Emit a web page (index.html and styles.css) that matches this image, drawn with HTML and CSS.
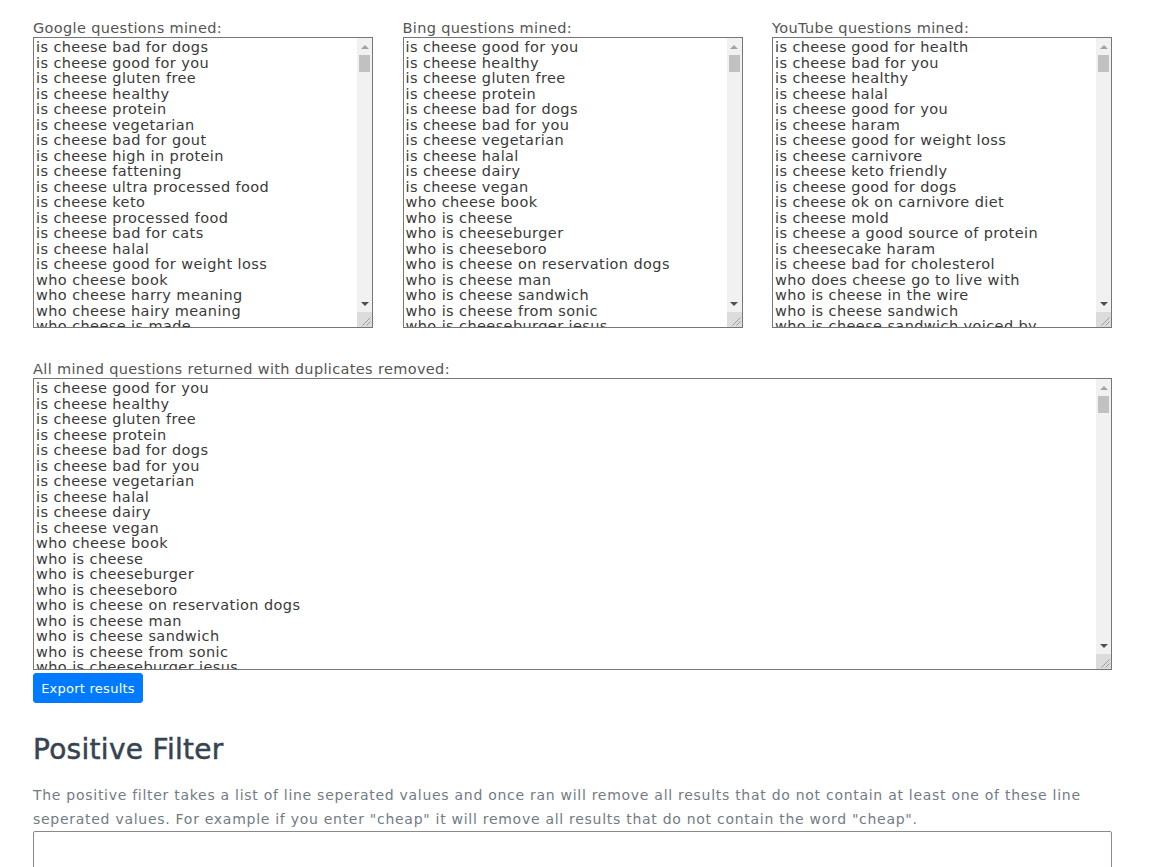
FILE: index.html
```html
<!DOCTYPE html>
<html lang="en">
<head>
<meta charset="utf-8">
<title>Question Miner</title>
<link rel="stylesheet" href="styles.css">
</head>
<body>
<main class="page">
  <section class="sources">
    <div class="source">
      <label class="field-label" for="google">Google questions mined:</label>
      <div class="list-box">
        <textarea id="google" class="list" data-more="google">is cheese bad for dogs
is cheese good for you
is cheese gluten free
is cheese healthy
is cheese protein
is cheese vegetarian
is cheese bad for gout
is cheese high in protein
is cheese fattening
is cheese ultra processed food
is cheese keto
is cheese processed food
is cheese bad for cats
is cheese halal
is cheese good for weight loss
who cheese book
who cheese harry meaning
who cheese hairy meaning
who cheese is made</textarea>
        <div class="scrollbar" aria-hidden="true">
          <span class="sb-btn sb-up"><svg width="8" height="4" viewBox="0 0 8 4"><path d="M0 4 L4 0 L8 4 Z"/></svg></span>
          <span class="sb-track"><span class="sb-thumb"></span></span>
          <span class="sb-btn sb-down"><svg width="8" height="4" viewBox="0 0 8 4"><path d="M0 0 L8 0 L4 4 Z"/></svg></span>
          <span class="sb-corner"><svg width="15" height="15" viewBox="0 0 15 15"><path d="M13.5 5.5 L5.5 13.5 M13.5 9.5 L9.5 13.5"/></svg></span>
        </div>
      </div>
    </div>
    <div class="source">
      <label class="field-label" for="bing">Bing questions mined:</label>
      <div class="list-box">
        <textarea id="bing" class="list" data-more="bing">is cheese good for you
is cheese healthy
is cheese gluten free
is cheese protein
is cheese bad for dogs
is cheese bad for you
is cheese vegetarian
is cheese halal
is cheese dairy
is cheese vegan
who cheese book
who is cheese
who is cheeseburger
who is cheeseboro
who is cheese on reservation dogs
who is cheese man
who is cheese sandwich
who is cheese from sonic
who is cheeseburger jesus</textarea>
        <div class="scrollbar" aria-hidden="true">
          <span class="sb-btn sb-up"><svg width="8" height="4" viewBox="0 0 8 4"><path d="M0 4 L4 0 L8 4 Z"/></svg></span>
          <span class="sb-track"><span class="sb-thumb"></span></span>
          <span class="sb-btn sb-down"><svg width="8" height="4" viewBox="0 0 8 4"><path d="M0 0 L8 0 L4 4 Z"/></svg></span>
          <span class="sb-corner"><svg width="15" height="15" viewBox="0 0 15 15"><path d="M13.5 5.5 L5.5 13.5 M13.5 9.5 L9.5 13.5"/></svg></span>
        </div>
      </div>
    </div>
    <div class="source">
      <label class="field-label" for="youtube">YouTube questions mined:</label>
      <div class="list-box">
        <textarea id="youtube" class="list" data-more="youtube">is cheese good for health
is cheese bad for you
is cheese healthy
is cheese halal
is cheese good for you
is cheese haram
is cheese good for weight loss
is cheese carnivore
is cheese keto friendly
is cheese good for dogs
is cheese ok on carnivore diet
is cheese mold
is cheese a good source of protein
is cheesecake haram
is cheese bad for cholesterol
who does cheese go to live with
who is cheese in the wire
who is cheese sandwich
who is cheese sandwich voiced by</textarea>
        <div class="scrollbar" aria-hidden="true">
          <span class="sb-btn sb-up"><svg width="8" height="4" viewBox="0 0 8 4"><path d="M0 4 L4 0 L8 4 Z"/></svg></span>
          <span class="sb-track"><span class="sb-thumb"></span></span>
          <span class="sb-btn sb-down"><svg width="8" height="4" viewBox="0 0 8 4"><path d="M0 0 L8 0 L4 4 Z"/></svg></span>
          <span class="sb-corner"><svg width="15" height="15" viewBox="0 0 15 15"><path d="M13.5 5.5 L5.5 13.5 M13.5 9.5 L9.5 13.5"/></svg></span>
        </div>
      </div>
    </div>
  </section>

  <section class="combined">
    <label class="field-label" for="all">All mined questions returned with duplicates removed:</label>
    <div class="list-box">
      <textarea id="all" class="list list-wide" data-more="all">is cheese good for you
is cheese healthy
is cheese gluten free
is cheese protein
is cheese bad for dogs
is cheese bad for you
is cheese vegetarian
is cheese halal
is cheese dairy
is cheese vegan
who cheese book
who is cheese
who is cheeseburger
who is cheeseboro
who is cheese on reservation dogs
who is cheese man
who is cheese sandwich
who is cheese from sonic
who is cheeseburger jesus</textarea>
      <div class="scrollbar" aria-hidden="true">
        <span class="sb-btn sb-up"><svg width="8" height="4" viewBox="0 0 8 4"><path d="M0 4 L4 0 L8 4 Z"/></svg></span>
        <span class="sb-track"><span class="sb-thumb"></span></span>
        <span class="sb-btn sb-down"><svg width="8" height="4" viewBox="0 0 8 4"><path d="M0 0 L8 0 L4 4 Z"/></svg></span>
        <span class="sb-corner"><svg width="15" height="15" viewBox="0 0 15 15"><path d="M13.5 5.5 L5.5 13.5 M13.5 9.5 L9.5 13.5"/></svg></span>
      </div>
    </div>
    <button class="btn-export" type="button">Export results</button>
  </section>

  <section class="filter">
    <h3 class="filter-title">Positive Filter</h3>
    <p class="filter-text">The positive filter takes a list of line seperated values and once ran will remove all results that do not contain at least one of these line seperated values. For example if you enter "cheap" it will remove all results that do not contain the word "cheap".</p>
    <textarea class="filter-input" aria-label="Positive filter values"></textarea>
  </section>
</main>
<script src="script.js"></script>
</body>
</html>
```

FILE: styles.css
```css
html, body {
  margin: 0;
  padding: 0;
  background: #ffffff;
}

body {
  font-family: "DejaVu Sans", "Liberation Sans", sans-serif;
}

.page {
  width: 1079px;
  padding: 20px 0 0 33px;
}

.sources {
  display: grid;
  grid-template-columns: repeat(3, 1fr);
  column-gap: 29.5px;
}

.source {
  display: flex;
  flex-direction: column;
}

.field-label {
  display: block;
  font-size: 14.5px;
  line-height: 17px;
  letter-spacing: 0.35px;
  color: #555555;
}

.list-box {
  position: relative;
}

.list {
  display: block;
  box-sizing: border-box;
  width: 100%;
  height: 291px;
  margin: 0;
  padding: 2px 17px 0 2px;
  font-family: "DejaVu Sans", "Liberation Sans", sans-serif;
  font-size: 14.5px;
  line-height: 15.5px;
  letter-spacing: 0.4px;
  color: #3a3a3a;
  border: 1px solid #767676;
  resize: none;
  white-space: pre;
  overflow-y: scroll;
  overflow-x: hidden;
  scrollbar-width: none;
}

.list::-webkit-scrollbar {
  width: 0;
  height: 0;
}

.list-wide {
  height: 292px;
}

/* drawn classic scrollbar over the right edge of a list */
.scrollbar {
  position: absolute;
  top: 1px;
  right: 1px;
  bottom: 1px;
  width: 15px;
  display: flex;
  flex-direction: column;
  background: #f1f1f1;
}

.sb-btn {
  flex: 0 0 17px;
  display: flex;
  align-items: center;
  justify-content: center;
}

.sb-up svg {
  fill: #a3a3a3;
}

.sb-down svg {
  fill: #505050;
}

.sb-track {
  flex: 1 1 auto;
  display: flex;
  flex-direction: column;
  padding: 0 2px;
}

.sb-thumb {
  display: block;
  height: 17px;
  background: #c1c1c1;
}

.sb-corner {
  flex: 0 0 15px;
  display: block;
  background: #dcdcdc;
}

.sb-corner svg {
  display: block;
  stroke: #9a9a9a;
  stroke-width: 1;
  fill: none;
}

.combined {
  margin-top: 33px;
}

.btn-export {
  display: block;
  margin-top: 3px;
  height: 30px;
  width: 110px;
  padding: 0;
  border: 1px solid #007bff;
  border-radius: 3px;
  background: #007bff;
  color: #ffffff;
  font-family: "DejaVu Sans", "Liberation Sans", sans-serif;
  font-size: 13px;
  letter-spacing: 0.25px;
  cursor: pointer;
}

.filter-title {
  margin: 31px 0 0;
  font-size: 28px;
  line-height: 32.4px;
  font-weight: normal;
  letter-spacing: 0.3px;
  color: #374351;
  -webkit-text-stroke: 0.5px #374351;
}

.filter-text {
  margin: 17px 0 0;
  font-size: 14px;
  line-height: 24px;
  letter-spacing: 0.72px;
  color: #737b84;
}

.filter-input {
  display: block;
  box-sizing: border-box;
  width: 100%;
  height: 100px;
  margin: 0;
  border: 1px solid #8a8a8a;
  border-radius: 2px;
}
```

FILE: script.js
```js
(function () {
  var starts = ["what", "why", "how", "when", "where", "which", "can", "does", "are", "will", "should", "who"];
  var topics = [
    "cheese made of", "cheese called", "cheese melt", "cheese mold", "cheese expire",
    "cheese pairs with wine", "cheese curds", "cheese aged", "cheese fondue", "cheese platter",
    "cheese smell", "cheese stored", "cheese sliced", "cheese produced", "cheese salted",
    "cheese grated", "cheese frozen", "cheese pasteurized", "cheese rind", "cheese wax",
    "cheese cave", "cheese board"
  ];
  var lists = document.querySelectorAll("textarea[data-more]");
  lists.forEach(function (ta) {
    var extra = [];
    starts.forEach(function (s) {
      topics.forEach(function (t) {
        extra.push(s + " is " + t);
      });
    });
    ta.value = ta.value + "\n" + extra.join("\n");
    ta.scrollTop = 0;
  });
})();
```
